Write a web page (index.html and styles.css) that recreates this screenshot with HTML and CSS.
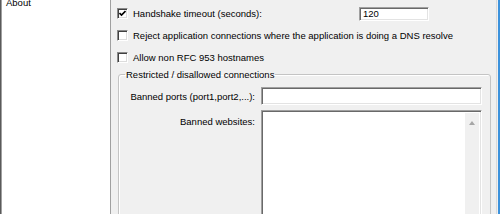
FILE: index.html
```html
<!DOCTYPE html>
<html>
<head>
<meta charset="utf-8">
<link rel="stylesheet" href="styles.css">
</head>
<body>
<div class="window">
  <div class="tree">
    <div class="tree-item">About</div>
  </div>
  <div class="page">
    <div class="opts">
      <div class="opt">
        <span class="cb"><svg class="check" width="7" height="7" viewBox="0 0 7 7"><polyline points="0.5,3 2.5,5 6.5,1" fill="none" stroke="#000" stroke-width="1.6"/></svg></span>
        <span class="opt-label wide">Handshake timeout (seconds):</span>
        <span class="field small">120</span>
      </div>
      <div class="opt">
        <span class="cb"></span>
        <span class="opt-label">Reject application connections where the application is doing a DNS resolve</span>
      </div>
      <div class="opt">
        <span class="cb"></span>
        <span class="opt-label">Allow non RFC 953 hostnames</span>
      </div>
    </div>
    <fieldset class="group">
      <legend class="group-title">Restricted / disallowed connections</legend>
      <div class="form">
        <span class="form-label mid">Banned ports (port1,port2,...):</span>
        <span class="field wide-field"></span>
        <span class="form-label top">Banned websites:</span>
        <div class="field textarea">
          <div class="ta-body"></div>
          <div class="vscroll"><span class="arrow-up"></span></div>
        </div>
      </div>
    </fieldset>
  </div>
  <div class="frame"></div>
</div>
</body>
</html>
```
FILE: styles.css
```css
* { box-sizing: border-box; }
html, body { margin: 0; padding: 0; }
body {
  width: 500px;
  height: 214px;
  overflow: hidden;
  background: #f0f0f0;
  font-family: "Liberation Sans", Arial, sans-serif;
  font-size: 9.5px;
  color: #000;
}
.window { display: flex; height: 214px; }
.tree {
  width: 111px;
  flex: none;
  background: #fff;
  border-left: 1px solid #5a5a5a;
  border-right: 1px solid #a0a0a0;
  box-shadow: inset 1px 0 0 #a0a0a0;
  overflow: hidden;
}
.tree-item { margin-top: -4px; padding-left: 5px; line-height: 13px; }
.page { flex: 1; min-width: 0; padding: 3px 5px 0 6px; overflow: hidden; }
.frame {
  width: 4px;
  flex: none;
  border-left: 1px solid #d9d9d9;
  border-right: 2px solid #3c92dc;
}
.opts { display: grid; grid-template-rows: 21px 22px 22px; }
.opt { display: flex; align-items: center; }
.cb {
  width: 11px;
  height: 11px;
  flex: none;
  background: #fff;
  border: 1px solid;
  border-color: #8a8a8a #fff #fff #8a8a8a;
  box-shadow: inset 1px 1px 0 #404040, inset -1px -1px 0 #dcdcdc;
  margin-right: 5px;
  display: flex;
  align-items: center;
  justify-content: center;
}
.check { display: block; }
.opt-label { white-space: nowrap; line-height: 13px; }
.opt-label.wide { width: 226px; flex: none; }
.field {
  background: #fff;
  border: 1px solid;
  border-color: #a0a0a0 #fff #fff #a0a0a0;
  box-shadow: inset 1px 1px 0 #696969, inset -1px -1px 0 #e3e3e3;
}
.field.small {
  width: 70px;
  height: 14px;
  padding-left: 3px;
  line-height: 12px;
}
.group {
  margin: 0 0 0 1px;
  padding: 6px 7px 0 0;
  border: 1px solid #c4c4c4;
  border-radius: 3px;
  box-shadow: inset 1px 1px 0 #fff;
  min-width: 0;
  height: 160px;
}
.group-title { margin-left: 6px; padding: 0 1px; line-height: 13px; }
.form {
  display: grid;
  grid-template-columns: 136px 221px;
  grid-template-rows: 18px 120px;
  column-gap: 6px;
  row-gap: 5px;
}
.form-label { justify-self: end; white-space: nowrap; line-height: 13px; }
.form-label.mid { align-self: center; }
.form-label.top { align-self: start; margin-top: 5px; }
.textarea { display: flex; }
.ta-body { flex: 1; }
.vscroll {
  width: 14px;
  margin: 2px 2px 0 0;
  background: #f0f0f0;
  display: flex;
  justify-content: center;
  padding-top: 8px;
}
.arrow-up {
  width: 0;
  height: 0;
  border-left: 3.5px solid transparent;
  border-right: 3.5px solid transparent;
  border-bottom: 4px solid #a6a6a6;
}
```
